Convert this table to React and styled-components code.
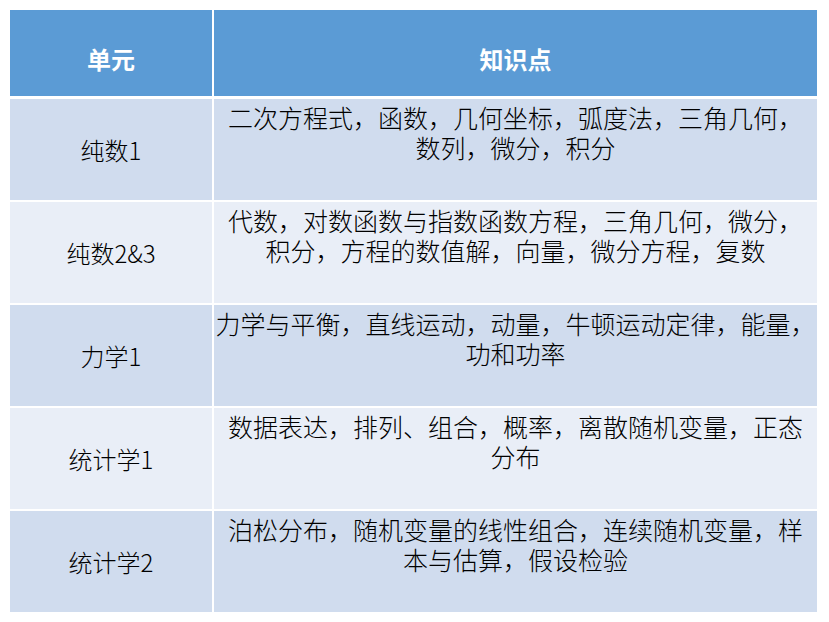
import React from "react";
import styled, { createGlobalStyle } from "styled-components";

const GlobalStyle = createGlobalStyle`
  html, body {
    margin: 0;
    padding: 0;
    background: #ffffff;
  }
  body {
    font-family: "Noto Sans CJK SC", "Noto Sans", sans-serif;
    color: #000;
  }
`;

const Page = styled.div`
  padding: 10px 0 0 10px;
`;

const Table = styled.div`
  display: flex;
  flex-direction: column;
  width: 807px;
  background: #ffffff;
`;

const HeaderRow = styled.div`
  display: grid;
  grid-template-columns: 202px 603px;
  column-gap: 2px;
  height: 86px;
  margin-bottom: 3px;
`;

const HeaderCell = styled.div`
  background: #5b9bd5;
  color: #ffffff;
  font-weight: 700;
  font-size: 24px;
  line-height: 30px;
  display: flex;
  align-items: center;
  justify-content: center;
  padding-top: 11px;
  box-sizing: border-box;
`;

const Body = styled.div`
  display: flex;
  flex-direction: column;
  row-gap: 2px;
`;

const Row = styled.div`
  display: grid;
  grid-template-columns: 202px 603px;
  column-gap: 2px;
  height: 101px;
`;

const UnitCell = styled.div`
  background: ${(p) => (p.$alt ? "#e9eef7" : "#d0dcee")};
  display: flex;
  align-items: center;
  justify-content: center;
  font-size: 24px;
  font-weight: 300;
  line-height: 30px;
  white-space: nowrap;
`;

const TopicCell = styled.div`
  background: ${(p) => (p.$alt ? "#e9eef7" : "#d0dcee")};
  display: flex;
  flex-direction: column;
  align-items: center;
  padding-top: 3px;
  box-sizing: border-box;
  font-size: 25px;
  font-weight: 300;
  line-height: 30px;
`;

const Line = styled.div`
  white-space: nowrap;
  text-align: center;
  height: 30px;
`;

const rows = [
  {
    unit: "纯数1",
    lines: ["二次方程式，函数，几何坐标，弧度法，三角几何，", "数列，微分，积分"],
  },
  {
    unit: "纯数2&3",
    lines: ["代数，对数函数与指数函数方程，三角几何，微分，", "积分，方程的数值解，向量，微分方程，复数"],
  },
  {
    unit: "力学1",
    lines: ["力学与平衡，直线运动，动量，牛顿运动定律，能量，", "功和功率"],
  },
  {
    unit: "统计学1",
    lines: ["数据表达，排列、组合，概率，离散随机变量，正态", "分布"],
  },
  {
    unit: "统计学2",
    lines: ["泊松分布，随机变量的线性组合，连续随机变量，样", "本与估算，假设检验"],
  },
];

export default function App() {
  return (
    <Page>
      <GlobalStyle />
      <Table>
        <HeaderRow>
          <HeaderCell>单元</HeaderCell>
          <HeaderCell>知识点</HeaderCell>
        </HeaderRow>
        <Body>
          {rows.map((r, i) => (
            <Row key={r.unit}>
              <UnitCell $alt={i % 2 === 1}>{r.unit}</UnitCell>
              <TopicCell $alt={i % 2 === 1}>
                {r.lines.map((l) => (
                  <Line key={l}>{l}</Line>
                ))}
              </TopicCell>
            </Row>
          ))}
        </Body>
      </Table>
    </Page>
  );
}
